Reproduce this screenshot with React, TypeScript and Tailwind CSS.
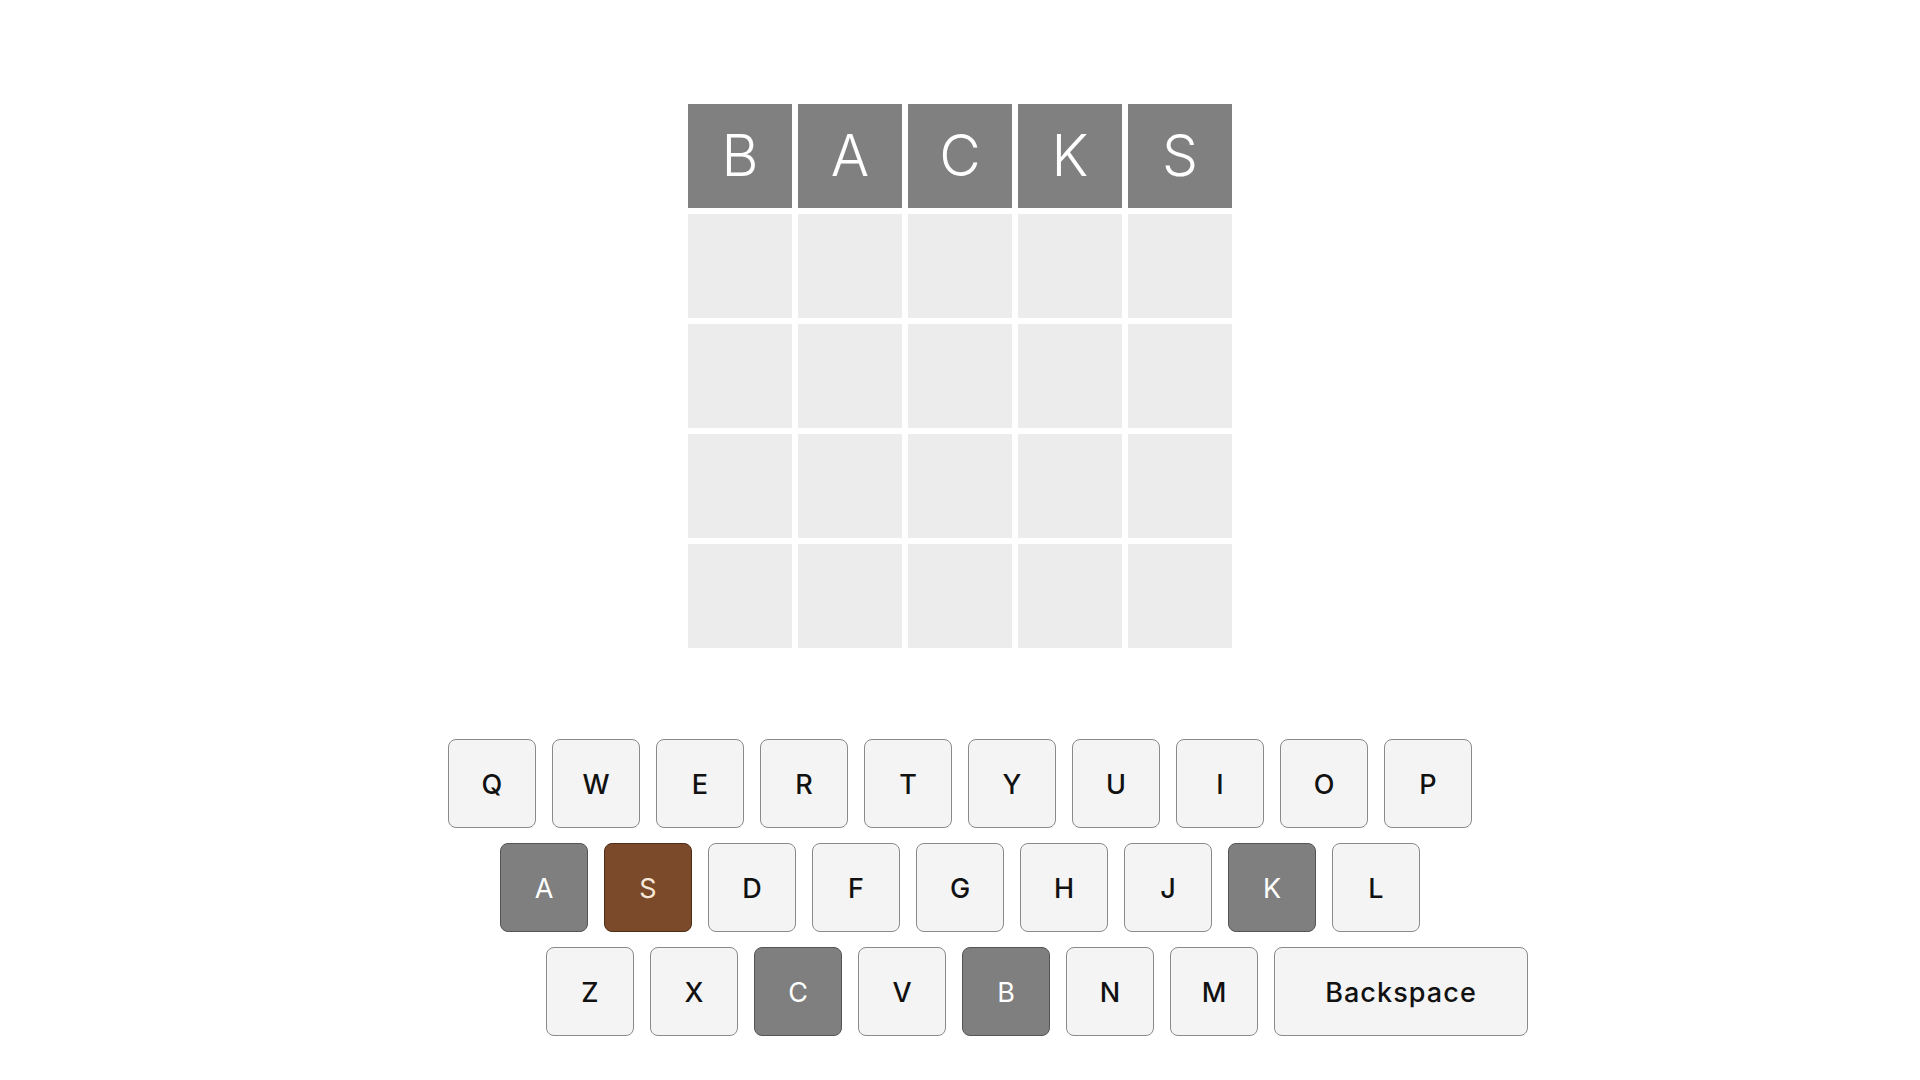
const guess = "BACKS";

const rows = [
  ["Q", "W", "E", "R", "T", "Y", "U", "I", "O", "P"],
  ["A", "S", "D", "F", "G", "H", "J", "K", "L"],
  ["Z", "X", "C", "V", "B", "N", "M"],
];

const absent = new Set(["A", "K", "C", "B"]);
const present = new Set(["S"]);

function Key({ label }: { label: string }) {
  const base =
    "flex h-[89px] w-[88px] items-center justify-center rounded-[8px] border pt-[3px] text-[27px]";
  if (present.has(label)) {
    return (
      <div className={`${base} border-[#4f2d17] bg-[#7b4a2a] text-[#f7e9da]`}>
        {label}
      </div>
    );
  }
  if (absent.has(label)) {
    return (
      <div className={`${base} border-[#555555] bg-[#7f7f7f] text-white`}>
        {label}
      </div>
    );
  }
  return (
    <div className={`${base} border-[#8a8a8a] bg-[#f4f4f4] font-medium text-[#111111]`}>
      {label}
    </div>
  );
}

export default function App() {
  return (
    <div
      className="flex min-h-[1080px] flex-col items-center bg-white pt-[104px]"
      style={{ fontFamily: "Inter, 'Noto Sans', sans-serif" }}
    >
      <div className="grid grid-cols-5 gap-[6px]">
        {Array.from({ length: 25 }).map((_, i) => {
          const letter = i < 5 ? guess[i] : "";
          return (
            <div
              key={i}
              className={
                letter
                  ? "flex h-[104px] w-[104px] items-center justify-center bg-[#808080] text-[57px] font-light text-white"
                  : "h-[104px] w-[104px] bg-[#ececec]"
              }
            >
              {letter}
            </div>
          );
        })}
      </div>

      <div className="mt-[91px] flex flex-col items-center gap-[15px]">
        <div className="flex gap-[16px]">
          {rows[0].map((k) => (
            <Key key={k} label={k} />
          ))}
        </div>
        <div className="flex gap-[16px]">
          {rows[1].map((k) => (
            <Key key={k} label={k} />
          ))}
        </div>
        <div className="flex gap-[16px]">
          <div className="invisible w-[138px]" />
          {rows[2].map((k) => (
            <Key key={k} label={k} />
          ))}
          <div className="flex h-[89px] w-[254px] items-center justify-center rounded-[8px] border border-[#8a8a8a] bg-[#f4f4f4] pt-[3px] text-[27px] font-medium tracking-[0.04em] text-[#111111]">
            Backspace
          </div>
        </div>
      </div>
    </div>
  );
}
